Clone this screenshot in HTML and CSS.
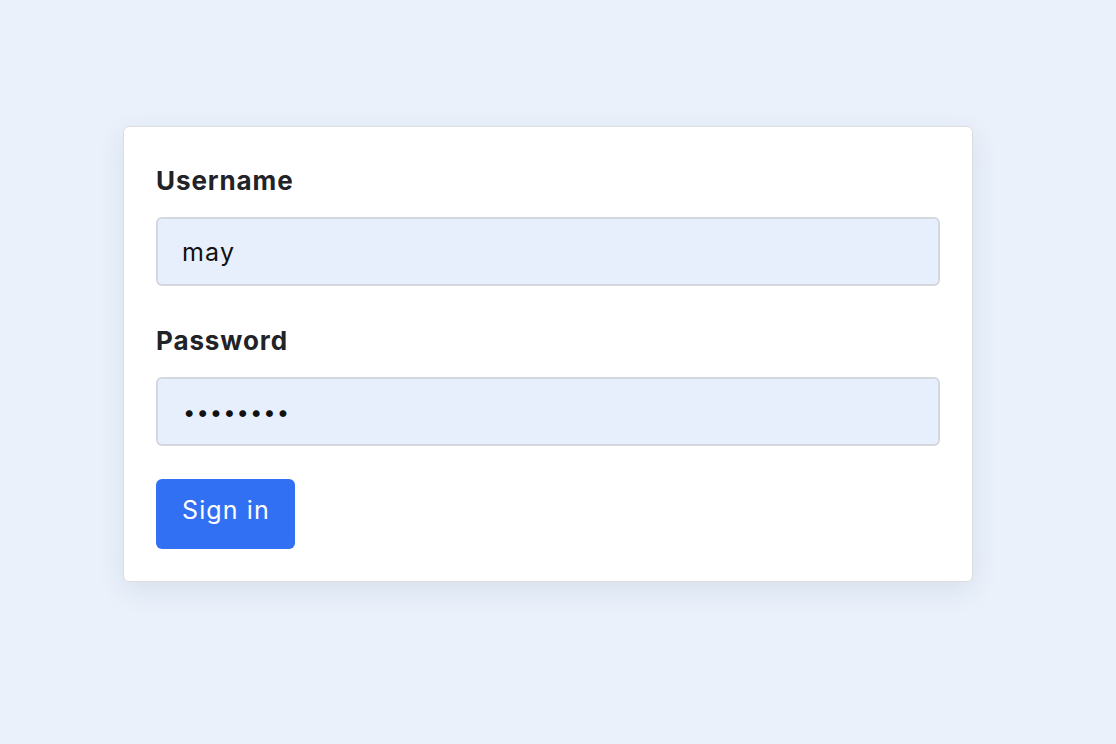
FILE: index.html
```html
<!DOCTYPE html>
<html lang="en">
<head>
<meta charset="utf-8">
<title>Sign in</title>
<link rel="stylesheet" href="styles.css">
</head>
<body>
<form class="card">
  <div class="field">
    <label class="label" for="u">Username</label>
    <input class="input" id="u" type="text" value="may">
  </div>
  <div class="field">
    <label class="label" for="p">Password</label>
    <input class="input input-pass" id="p" type="password" value="abcdefgh">
  </div>
  <button class="btn" type="button">Sign in</button>
</form>
</body>
</html>
```

FILE: styles.css
```css
html, body {
  margin: 0;
  background: #eaf1fb;
}
body {
  box-sizing: border-box;
  min-height: 100vh;
  padding: 126px 0 0 123px;
  font-family: Inter, "Liberation Sans", sans-serif;
}
.card {
  box-sizing: border-box;
  width: 850px;
  background: #fff;
  border: 1px solid #dcdde0;
  border-radius: 6px;
  box-shadow: 0 8px 28px rgba(30, 50, 90, 0.09);
  padding: 32px;
  display: flex;
  flex-direction: column;
  align-items: flex-start;
}
.field {
  width: 100%;
  display: flex;
  flex-direction: column;
  margin-bottom: 33px;
}
.field:first-child {
  margin-bottom: 33px;
}
.label {
  font-size: 26px;
  font-weight: 700;
  letter-spacing: 0.9px;
  color: #212327;
  line-height: 43px;
  margin-bottom: 15px;
}
.input {
  box-sizing: border-box;
  width: 100%;
  height: 69px;
  background: #e8effc;
  border: 2px solid #d3d8df;
  border-radius: 6px;
  padding: 0 24px;
  font-family: Inter, "Liberation Sans", sans-serif;
  font-size: 25px;
  letter-spacing: 1.2px;
  color: #111;
  outline: none;
}
.input-pass {
  font-size: 22px;
  letter-spacing: 1px;
  padding-left: 25px;
}
.btn {
  box-sizing: border-box;
  width: 139px;
  height: 70px;
  padding: 0 0 8px 26px;
  text-align: left;
  background: #3170f3;
  color: #fff;
  border: none;
  border-radius: 6px;
  font-family: Inter, "Liberation Sans", sans-serif;
  font-size: 25px;
  letter-spacing: 1.1px;
}
```
